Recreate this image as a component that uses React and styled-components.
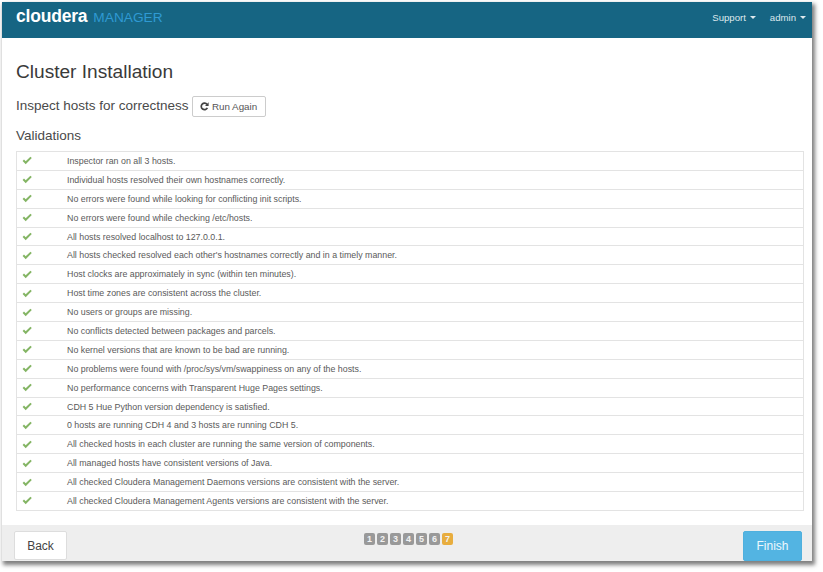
import React from 'react';
import styled, { createGlobalStyle } from 'styled-components';

const Global = createGlobalStyle`
  html, body { margin: 0; padding: 0; background: #fff; }
  body { font-family: "Liberation Sans", Arial, sans-serif; color: #333; }
`;
const Page = styled.div`
  width: 823px; height: 572px; padding: 2px 0 0 2px; box-sizing: border-box; overflow: hidden;
`;
const Win = styled.div`
  width: 810px; height: 559px; background: #fff; display: flex; flex-direction: column;
  box-shadow: 2px 3px 4px 1px rgba(0,0,0,.5);
`;
const Navbar = styled.header`
  height: 36px; background: #166583; display: flex; align-items: center; justify-content: space-between;
  padding: 0 6px 0 14px; flex: none;
`;
const Logo = styled.div`display: flex; align-items: baseline; gap: 6px; margin-top: -7px;`;
const LogoMain = styled.span`color: #fff; font-size: 17.5px; font-weight: 700; letter-spacing: -.2px;`;
const LogoSub = styled.span`color: #2f9ad3; font-size: 13.7px;`;
const NavMenu = styled.nav`display: flex; gap: 14px; margin-top: -6px;`;
const NavItem = styled.span`
  color: #dfe9ee; font-size: 9.6px; display: inline-flex; align-items: center; gap: 4px;
  &::after { content: ""; border-left: 3px solid transparent; border-right: 3px solid transparent; border-top: 3px solid #dfe9ee; }
`;
const Main = styled.main`flex: 1; padding: 0 8px 0 14px; min-height: 0;`;
const Title = styled.h1`font-size: 19.1px; font-weight: 400; margin: 23px 0 0; line-height: 22px; color: #3a3a3a;`;
const SubRow = styled.div`display: flex; align-items: center; gap: 3px; margin-top: 12px; height: 22px;`;
const Sub = styled.h2`font-size: 13.5px; font-weight: 400; margin: 0; color: #4a4a4a; position: relative; top: -1px;`;
const RunBtn = styled.button`
  font: 9.8px "Liberation Sans", Arial, sans-serif; color: #555; background: #fff; border: 1px solid #ccc; border-radius: 2px;
  height: 21px; width: 74px; padding: 0; display: inline-flex; align-items: center; justify-content: center; gap: 3px;
`;
const Sect = styled.h3`font-size: 13.5px; font-weight: 400; margin: 9px 0 0; line-height: 20px; color: #4a4a4a;`;
const List = styled.div`margin-top: 5px; border: 1px solid #e3e3e3; border-bottom-width: 0;`;
const Row = styled.div`
  height: 18.9px; box-sizing: border-box; border-bottom: 1px solid #e3e3e3; display: flex; align-items: center;
  font-size: 8.84px; color: #5a5a5a; padding-left: 5px;
`;
const Check = styled.svg`width: 10px; height: 9px; flex: none; margin-right: 35px;`;
const Footer = styled.footer`
  height: 36px; flex: none; background: #eeeeee; display: flex; justify-content: space-between; align-items: flex-start;
  padding: 6px 10px 0 12px; box-sizing: border-box; position: relative;
`;
const BackBtn = styled.button`
  width: 53px; height: 29px; background: #fff; border: 1px solid #ddd; border-radius: 2px; padding: 0;
  font: 12px "Liberation Sans", Arial, sans-serif; color: #444;
`;
const FinishBtn = styled.button`
  width: 59px; height: 30px; background: #53b4e2; border: 1px solid #4fb0de; border-radius: 2px; padding: 0;
  font: 12px "Liberation Sans", Arial, sans-serif; color: #eef8fd;
`;
const Steps = styled.div`position: absolute; left: 362px; top: 8px; display: flex; gap: 2px;`;
const Step = styled.span`
  width: 11px; height: 12px; border-radius: 2px; background: ${p => p.$on ? '#e8ad3e' : '#999'}; color: #f2f2f2;
  font-size: 9px; font-weight: 700; display: flex; align-items: center; justify-content: center;
`;

const items = [
  'Inspector ran on all 3 hosts.',
  'Individual hosts resolved their own hostnames correctly.',
  'No errors were found while looking for conflicting init scripts.',
  'No errors were found while checking /etc/hosts.',
  'All hosts resolved localhost to 127.0.0.1.',
  "All hosts checked resolved each other's hostnames correctly and in a timely manner.",
  'Host clocks are approximately in sync (within ten minutes).',
  'Host time zones are consistent across the cluster.',
  'No users or groups are missing.',
  'No conflicts detected between packages and parcels.',
  'No kernel versions that are known to be bad are running.',
  'No problems were found with /proc/sys/vm/swappiness on any of the hosts.',
  'No performance concerns with Transparent Huge Pages settings.',
  'CDH 5 Hue Python version dependency is satisfied.',
  '0 hosts are running CDH 4 and 3 hosts are running CDH 5.',
  'All checked hosts in each cluster are running the same version of components.',
  'All managed hosts have consistent versions of Java.',
  'All checked Cloudera Management Daemons versions are consistent with the server.',
  'All checked Cloudera Management Agents versions are consistent with the server.',
];

export default function App() {
  return (
    <Page>
      <Global />
      <Win>
        <Navbar>
          <Logo><LogoMain>cloudera</LogoMain><LogoSub>MANAGER</LogoSub></Logo>
          <NavMenu><NavItem>Support</NavItem><NavItem>admin</NavItem></NavMenu>
        </Navbar>
        <Main>
          <Title>Cluster Installation</Title>
          <SubRow>
            <Sub>Inspect hosts for correctness</Sub>
            <RunBtn>
              <svg width="9" height="9" viewBox="0 0 10 10" fill="none" stroke="#444" strokeWidth="1.9">
                <path d="M8.2 6.6A3.6 3.6 0 1 1 7.9 2.8" />
                <path d="M9.6 .4V4.4H5.6z" fill="#444" stroke="none" />
              </svg>
              Run Again
            </RunBtn>
          </SubRow>
          <Sect>Validations</Sect>
          <List>
            {items.map(t => (
              <Row key={t}>
                <Check viewBox="0 0 10 9"><path d="M.6 5 2 3.6 3.7 5.3 8.4.7 9.8 2 3.7 8.2z" fill="#84b564" /></Check>
                {t}
              </Row>
            ))}
          </List>
        </Main>
        <Footer>
          <BackBtn>Back</BackBtn>
          <Steps>{[1,2,3,4,5,6,7].map(n => <Step key={n} $on={n === 7}>{n}</Step>)}</Steps>
          <FinishBtn>Finish</FinishBtn>
        </Footer>
      </Win>
    </Page>
  );
}
